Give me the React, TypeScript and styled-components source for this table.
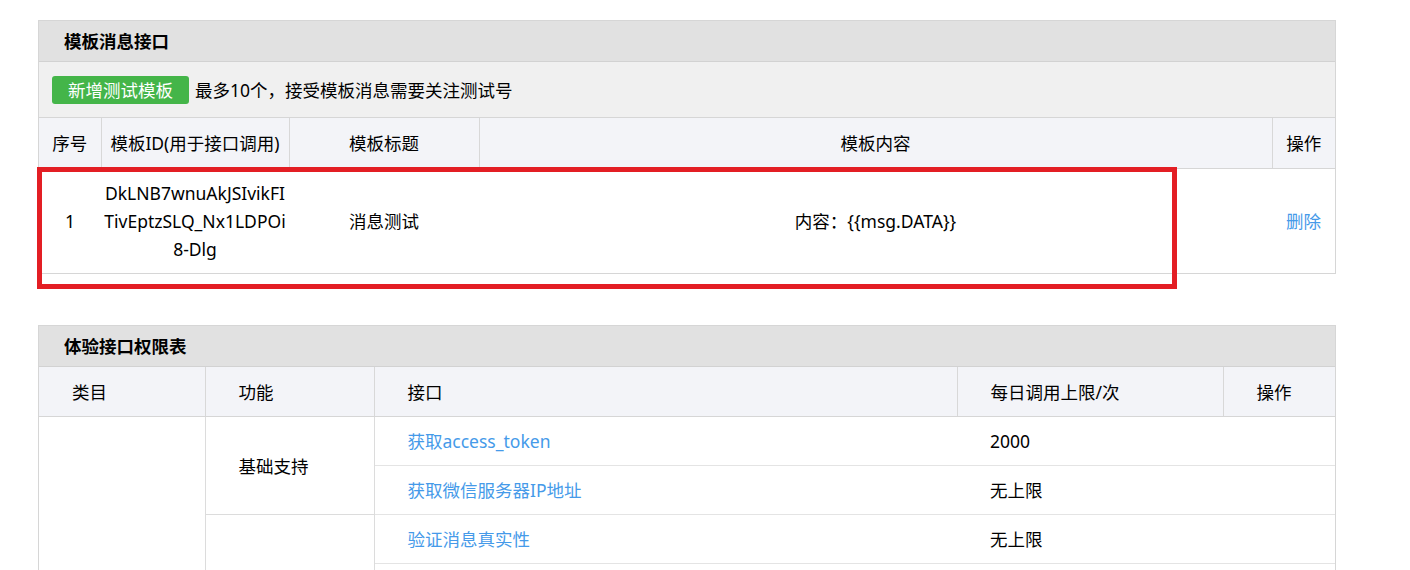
import React from 'react';
import styled, { createGlobalStyle } from 'styled-components';

const templates = [
    {
        id: ['DkLNB7wnuAkJSIvikFI', 'TivEptzSLQ_Nx1LDPOi', '8-Dlg'],
        title: '消息测试',
        content: '内容：{{msg.DATA}}',
    },
];

const apiGroups = [
    {feature: '基础支持', apis: [['获取access_token', '2000'], ['获取微信服务器IP地址', '无上限']]},
    {feature: '接收消息', apis: [['验证消息真实性', '无上限'], ['接收普通消息', '无上限'], ['接收事件推送', '无上限'], ['接收语音识别结果', '无上限']]},
    {feature: '发送消息', apis: [['自动回复', '无上限'], ['客服接口', '500000']]},
];

const totalApis = apiGroups.reduce((n, g) => n + g.apis.length, 0);

const App = () => {
    return (
        <>
            <GlobalStyle/>
            <Page>
                <Panel>
                    <PanelTitle>模板消息接口</PanelTitle>
                    <Toolbar>
                        <AddButton type="button">新增测试模板</AddButton>
                        <Hint>最多10个，接受模板消息需要关注测试号</Hint>
                    </Toolbar>
                    <Table>
                        <colgroup>
                            <col style={{width: 62}}/>
                            <col style={{width: 188}}/>
                            <col style={{width: 190}}/>
                            <col style={{width: 793}}/>
                            <col/>
                        </colgroup>
                        <thead>
                        <tr>
                            <HeadCell>序号</HeadCell>
                            <HeadCell>模板ID(用于接口调用)</HeadCell>
                            <HeadCell>模板标题</HeadCell>
                            <HeadCell>模板内容</HeadCell>
                            <HeadCell>操作</HeadCell>
                        </tr>
                        </thead>
                        <tbody>
                        {templates.map((t, i) => (
                            <tr key={i}>
                                <TemplateCell>{i + 1}</TemplateCell>
                                <TemplateCell>
                                    {t.id.map(part => <IdLine key={part}>{part}</IdLine>)}
                                </TemplateCell>
                                <TemplateCell>{t.title}</TemplateCell>
                                <TemplateCell>{t.content}</TemplateCell>
                                <TemplateCell><Link href="#">删除</Link></TemplateCell>
                            </tr>
                        ))}
                        </tbody>
                    </Table>
                    <Highlight/>
                </Panel>

                <Panel>
                    <PanelTitle>体验接口权限表</PanelTitle>
                    <Table>
                        <colgroup>
                            <col style={{width: 166}}/>
                            <col style={{width: 169}}/>
                            <col style={{width: 583}}/>
                            <col style={{width: 266}}/>
                            <col/>
                        </colgroup>
                        <thead>
                        <tr>
                            <HeadCell $left>类目</HeadCell>
                            <HeadCell $left>功能</HeadCell>
                            <HeadCell $left>接口</HeadCell>
                            <HeadCell $left>每日调用上限/次</HeadCell>
                            <HeadCell $left>操作</HeadCell>
                        </tr>
                        </thead>
                        <tbody>
                        {apiGroups.map((group, gi) =>
                            group.apis.map(([name, limit], ai) => (
                                <tr key={name}>
                                    {gi === 0 && ai === 0 && (
                                        <SpanCell rowSpan={totalApis}>对话服务</SpanCell>
                                    )}
                                    {ai === 0 && (
                                        <SpanCell rowSpan={group.apis.length}>{group.feature}</SpanCell>
                                    )}
                                    <ApiCell><Link href="#">{name}</Link></ApiCell>
                                    <ApiCell>{limit}</ApiCell>
                                    <ApiCell/>
                                </tr>
                            ))
                        )}
                        </tbody>
                    </Table>
                </Panel>
            </Page>
        </>
    );
};

export default App;

const GlobalStyle = createGlobalStyle`
    html, body {
        margin: 0;
        padding: 0;
        background: #fff;
        overflow: hidden;
    }

    body {
        font-family: "Noto Sans", "Noto Sans CJK SC", sans-serif;
        font-size: 17.5px;
        color: #000;
    }
`

const Page = styled.div`
    display: flex;
    flex-direction: column;
    gap: 51px;
    padding: 20px 0 0 38px;
`

const Panel = styled.section`
    position: relative;
    width: 1298px;
    box-sizing: border-box;
    border: 1px solid #d6d6d6;
    background: #fff;
`

const PanelTitle = styled.h3`
    margin: 0;
    height: 40px;
    line-height: 40px;
    padding-left: 25px;
    font-size: 17.5px;
    font-weight: 700;
    background: #e1e1e1;
    border-bottom: 1px solid #d2d2d2;
`

const Toolbar = styled.div`
    display: flex;
    align-items: center;
    gap: 6px;
    height: 55px;
    padding-left: 13px;
    background: #f0f0f0;
    border-bottom: 1px solid #d6d6d6;
`

const AddButton = styled.button`
    height: 28px;
    padding: 0 16px;
    border: none;
    border-radius: 3px;
    background: #44b549;
    color: #fff;
    font: inherit;
    line-height: 28px;
    cursor: pointer;
`

const Hint = styled.span`
    line-height: 28px;
`

const Table = styled.table`
    width: 100%;
    table-layout: fixed;
    border-collapse: collapse;
`

const HeadCell = styled.th<{ $left?: boolean }>`
    height: 50px;
    box-sizing: border-box;
    padding: 0 ${p => p.$left ? '0 0 33px' : '0'};
    background: #f3f4f8;
    border-right: 1px solid #d8d8d8;
    border-bottom: 1px solid #d6d6d6;
    font-weight: 400;
    text-align: ${p => p.$left ? 'left' : 'center'};
    white-space: nowrap;

    &:last-child {
        border-right: none;
    }
`

const TemplateCell = styled.td`
    padding: 10px 0;
    line-height: 28px;
    text-align: center;
    vertical-align: middle;
`

const IdLine = styled.span`
    display: block;
`

const SpanCell = styled.td`
    padding: 10px 0 10px 33px;
    line-height: 28px;
    border-right: 1px solid #dcdcdc;
    border-bottom: 1px solid #dcdcdc;
    vertical-align: middle;
`

const ApiCell = styled.td`
    padding: 10px 0 10px 33px;
    line-height: 28px;
    border-bottom: 1px solid #e4e4e4;
    vertical-align: middle;
`

const Link = styled.a`
    color: #459ae9;
    text-decoration: none;
`

const Highlight = styled.div`
    position: absolute;
    left: -2px;
    top: 146px;
    width: 1140px;
    height: 122px;
    box-sizing: border-box;
    border: 5px solid #e31e24;
    pointer-events: none;
`
